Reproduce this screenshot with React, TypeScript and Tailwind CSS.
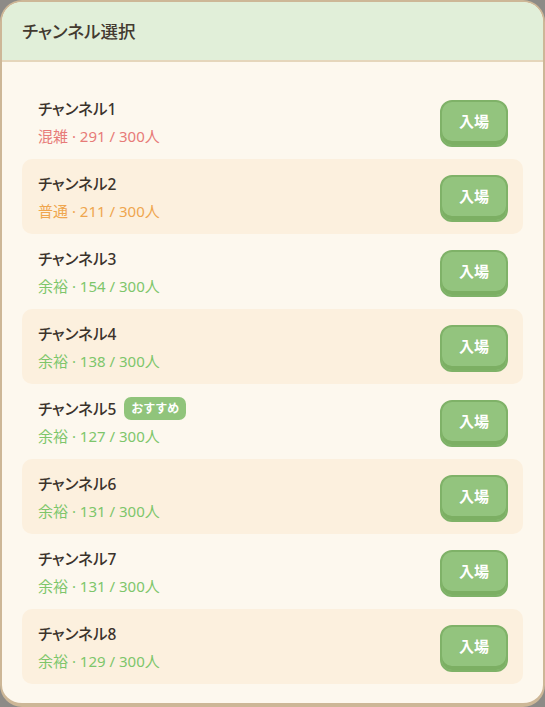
const channels = [
  { name: "チャンネル1", status: "混雑", count: 291, color: "text-[#e77b78]" },
  { name: "チャンネル2", status: "普通", count: 211, color: "text-[#efa64e]" },
  { name: "チャンネル3", status: "余裕", count: 154, color: "text-[#7dc66b]" },
  { name: "チャンネル4", status: "余裕", count: 138, color: "text-[#7dc66b]" },
  { name: "チャンネル5", status: "余裕", count: 127, color: "text-[#7dc66b]", recommended: true },
  { name: "チャンネル6", status: "余裕", count: 131, color: "text-[#7dc66b]" },
  { name: "チャンネル7", status: "余裕", count: 131, color: "text-[#7dc66b]" },
  { name: "チャンネル8", status: "余裕", count: 129, color: "text-[#7dc66b]" },
];

export default function App() {
  return (
    <div
      className="w-[545px] h-[707px] bg-[#8d8b87] overflow-hidden"
      style={{ fontFamily: '"Noto Sans", "Noto Sans CJK JP", sans-serif' }}
    >
      <div className="h-full flex flex-col bg-[#fdf8ee] rounded-[22px] border-2 border-b-4 border-[#cdb797] overflow-hidden">
        {/* Header */}
        <div className="h-[60px] shrink-0 flex items-center px-5 bg-[#e1efd9] border-b-2 border-[#e5d6bb]">
          <h1 className="text-[17.5px] font-medium text-[#433a30] [font-feature-settings:'palt']">チャンネル選択</h1>
        </div>

        {/* Channel list */}
        <div className="flex flex-col px-5 pt-[22px]">
          {channels.map((ch, i) => (
            <div
              key={ch.name}
              className={`h-[75px] flex items-center justify-between pl-4 pr-[15px] rounded-[10px] ${
                i % 2 === 1 ? "bg-[#fcf0de]" : ""
              }`}
            >
              <div className="flex flex-col gap-[6px]">
                <div className="flex items-center gap-2">
                  <span className="text-[15.5px] font-medium text-[#3b332c] leading-[22px] [font-feature-settings:'palt']">
                    {ch.name}
                  </span>
                  {ch.recommended && (
                    <span className="h-[23px] px-[7px] flex items-center rounded-[7px] bg-[#90c47b] text-white text-[12px] font-bold">
                      おすすめ
                    </span>
                  )}
                </div>
                <span className={`text-[15px] leading-[20px] ${ch.color}`}>
                  {ch.status} · {ch.count} / 300人
                </span>
              </div>
              <button className="mt-[3px] w-[68px] h-[47px] flex items-center justify-center pb-[3px] rounded-[12px] bg-[#93c47e] border-2 border-[#7fb268] shadow-[inset_0_-4px_0_#7caf63] text-white text-[15px] font-bold">
                入場
              </button>
            </div>
          ))}
        </div>
      </div>
    </div>
  );
}
